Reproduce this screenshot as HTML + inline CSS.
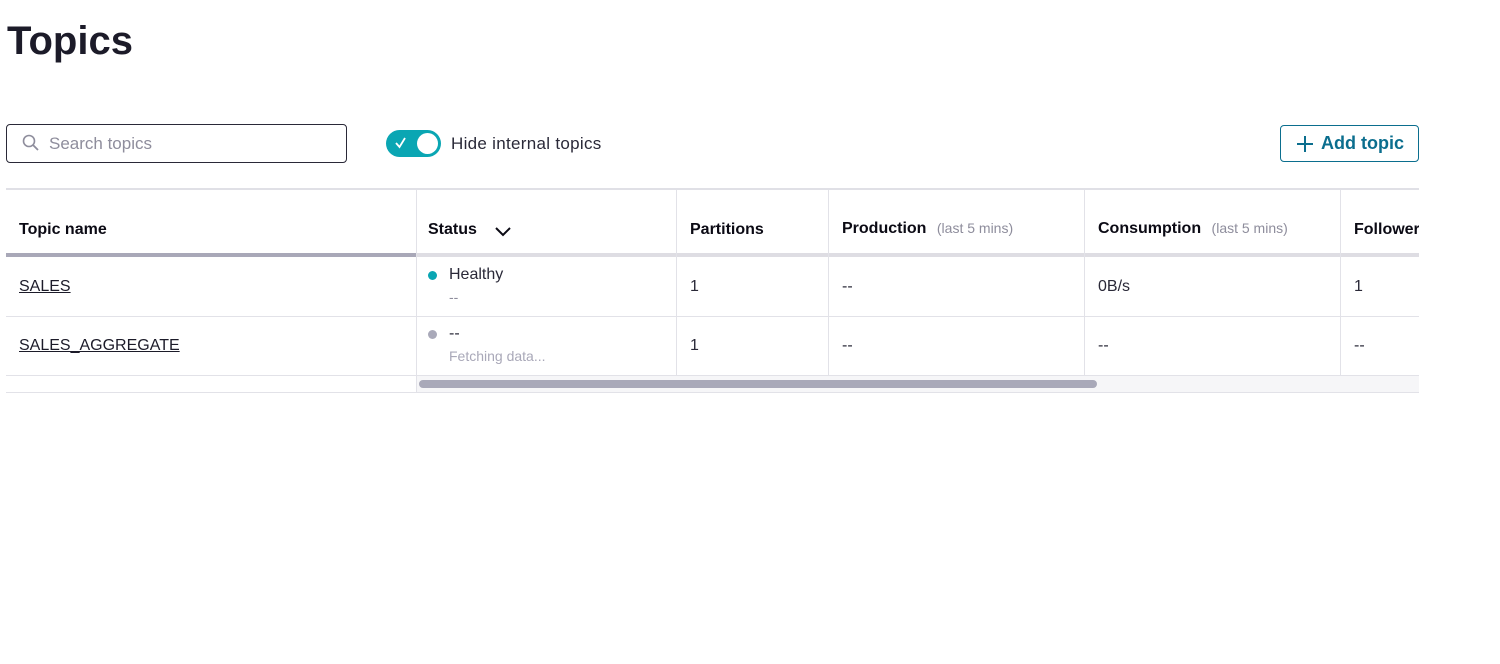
<!DOCTYPE html>
<html><head><style>
body{margin:0;width:1500px;height:664px;background:#fff;font-family:"Liberation Sans",sans-serif;color:#1c1b29;position:relative;overflow:hidden}
.a{position:absolute}
.h{font-weight:bold;font-size:16px;color:#0b0a14}
.c{font-size:16px;color:#2a2938}
.sub{font-size:14px;color:#8e8d9c;font-weight:normal}
.vl{position:absolute;width:1px;background:#e2e2e8}
</style></head><body>
<div class="a" style="left:7px;top:19px;font-size:40px;font-weight:bold;color:#1c1b29">Topics</div>

<div class="a" style="left:6px;top:124px;width:339px;height:37px;border:1px solid #2a2938;border-radius:4px"></div>
<svg class="a" style="left:21px;top:133px" width="20" height="20" viewBox="0 0 20 20"><circle cx="8" cy="8" r="5.5" fill="none" stroke="#8e8d9c" stroke-width="1.6"/><path d="M12 12 L17 17" stroke="#8e8d9c" stroke-width="1.8"/></svg>
<div class="a" style="left:49px;top:134px;font-size:17px;color:#8e8d9c">Search topics</div>

<div class="a" style="left:386px;top:130px;width:55px;height:27px;border-radius:14px;background:#0aa6b3"></div>
<div class="a" style="left:417px;top:133px;width:21px;height:21px;border-radius:50%;background:#fff"></div>
<svg class="a" style="left:393px;top:135px" width="16" height="16" viewBox="0 0 16 16"><path d="M3 8 L6.5 12 L12 3" fill="none" stroke="#fff" stroke-width="1.8"/></svg>
<div class="a" style="left:451px;top:134px;font-size:17px;color:#2a2938;letter-spacing:0.3px">Hide internal topics</div>

<div class="a" style="left:1280px;top:125px;width:137px;height:35px;border:1px solid #0b6e8e;border-radius:4px"></div>
<svg class="a" style="left:1295px;top:134px" width="20" height="20" viewBox="0 0 20 20"><path d="M10 2V18M2 10H18" stroke="#0b6e8e" stroke-width="2"/></svg>
<div class="a" style="left:1321px;top:133px;font-size:18px;font-weight:bold;color:#0b6e8e">Add topic</div>

<div class="a" style="left:6px;top:188px;width:1413px;height:2px;background:#e0e0e6"></div>
<div class="a" style="left:6px;top:253px;width:1413px;height:4px;background:#dedde3"></div>
<div class="a" style="left:6px;top:253px;width:410px;height:4px;background:#a9a8b8"></div>
<div class="a" style="left:6px;top:316px;width:1413px;height:1px;background:#e2e2e8"></div>
<div class="a" style="left:6px;top:375px;width:1413px;height:1px;background:#e2e2e8"></div>
<div class="a" style="left:417px;top:376px;width:1002px;height:16px;background:#f6f6f8"></div>
<div class="a" style="left:419px;top:380px;width:678px;height:8px;border-radius:4px;background:#a9a9b9"></div>
<div class="a" style="left:6px;top:392px;width:1413px;height:1px;background:#e2e2e8"></div>
<div class="vl" style="left:416px;top:190px;height:202px"></div>
<div class="vl" style="left:676px;top:190px;height:186px"></div>
<div class="vl" style="left:828px;top:190px;height:186px"></div>
<div class="vl" style="left:1084px;top:190px;height:186px"></div>
<div class="vl" style="left:1340px;top:190px;height:186px"></div>

<div class="a h" style="left:19px;top:221px">Topic name</div>
<div class="a h" style="left:428px;top:221px">Status</div>
<svg class="a" style="left:494px;top:224px" width="18" height="14" viewBox="0 0 18 14"><path d="M2 4 L9 11 L16 4" fill="none" stroke="#0b0a14" stroke-width="2"/></svg>
<div class="a h" style="left:690px;top:221px">Partitions</div>
<div class="a h" style="left:842px;top:220px">Production <span class="sub" style="margin-left:6px">(last 5 mins)</span></div>
<div class="a h" style="left:1098px;top:220px">Consumption <span class="sub" style="margin-left:6px">(last 5 mins)</span></div>
<div class="a" style="left:1354px;top:221px;width:65px;overflow:hidden;white-space:nowrap"><span class="h">Followers</span></div>

<div class="a c" style="left:19px;top:278px;text-decoration:underline;color:#1c1b29">SALES</div>
<div class="a" style="left:428px;top:271px;width:9px;height:9px;border-radius:50%;background:#0aa6b3"></div>
<div class="a c" style="left:449px;top:266px">Healthy</div>
<div class="a sub" style="left:449px;top:289px">--</div>
<div class="a c" style="left:690px;top:278px">1</div>
<div class="a c" style="left:842px;top:278px">--</div>
<div class="a c" style="left:1098px;top:278px">0B/s</div>
<div class="a c" style="left:1354px;top:278px">1</div>

<div class="a c" style="left:19px;top:337px;text-decoration:underline;color:#1c1b29">SALES_AGGREGATE</div>
<div class="a" style="left:428px;top:330px;width:9px;height:9px;border-radius:50%;background:#a9a9b9"></div>
<div class="a c" style="left:449px;top:325px">--</div>
<div class="a" style="left:449px;top:348px;font-size:14px;color:#a9a8b8">Fetching data...</div>
<div class="a c" style="left:690px;top:337px">1</div>
<div class="a c" style="left:842px;top:337px">--</div>
<div class="a c" style="left:1098px;top:337px">--</div>
<div class="a c" style="left:1354px;top:337px">--</div>
</body></html>
